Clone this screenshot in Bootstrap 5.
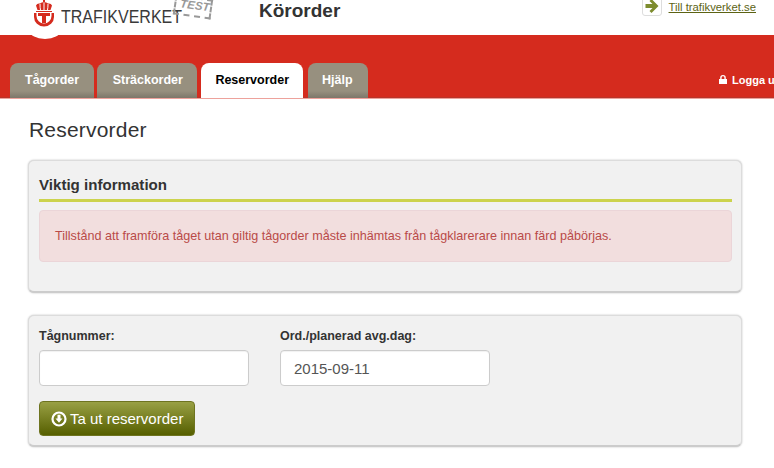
<!DOCTYPE html>
<html lang="sv">
<head>
<meta charset="utf-8">
<title>Körorder</title>
<link href="https://cdn.jsdelivr.net/npm/bootstrap@5.3.0/dist/css/bootstrap.min.css" rel="stylesheet">
<style>
html,body{height:468px;overflow:hidden}
body{font-family:"Liberation Sans",Arial,sans-serif;color:#333;background:#fff}
.topbar{height:35px;overflow:visible}
.brand{width:241px;padding-left:33px}
.brandtext{font-size:18px;line-height:18px;color:#3a3a3a;margin-left:6px;margin-top:8px;transform:scaleX(.89);transform-origin:left center;white-space:nowrap}
.teststamp{font-size:11.5px;font-weight:700;color:#999;border:2px dashed #999;line-height:12px;width:38px;height:20px;padding:0 0 0 4px;transform:rotate(8deg);position:absolute;left:174px;top:-3px;font-style:italic;white-space:nowrap}
.apptitle{font-size:19px;font-weight:700;color:#333;line-height:22px;margin-left:18px}
.extlink{margin-left:auto;margin-right:18px;font-size:11.300px;line-height:14px;gap:7px}
.extlink a{color:#5c6314;font-weight:400}
.arrowbox{width:20px;height:21px;border:1px solid #ddd;border-radius:3px;background:#fff;margin-top:-5px;padding-top:1px}
.redband{height:63px;background:#d52b1e;box-shadow:inset 0 -1px 0 #b8352b,0 1px 0 #eda29c;padding-left:10px;overflow:hidden;position:relative}
.logonotch{position:absolute;left:29px;top:-14px;width:32px;height:18px;background:#fff;border-radius:50%}
.tabrow{gap:3px}
.tabitem{height:35px;padding:0 14px;border-radius:8px 8px 0 0;font-size:12.5px;font-weight:700;color:#fff;background:linear-gradient(#97907f 0,#97907f 80%,#7d776a 100%);line-height:35px;text-decoration:none}
a.tabitem:hover{color:#fff}
.tabitem.tabwide{padding:0 14.500px 0 15.500px}
.tabitem.tabfirst{padding:0 15px}
.tabitem.on{background:#fff;color:#000;margin:0 2px 0 1px}
.tabitem.tablast{padding:0 15px 0 14px}
.logout{position:absolute;left:719px;top:39px;font-size:11px;font-weight:700;color:#fff;white-space:nowrap;line-height:13px}
.logout svg{vertical-align:.500px;margin-right:2px}
.pagebody{padding:0 32px 0 28px}
.pagehead{font-size:21px;font-weight:400;color:#333;line-height:24px;margin:20px 0 18px 1px;letter-spacing:.2px}
.panelbox{background:#f1f1f1;border:1px solid #dcdcdc;border-bottom:2px solid #ccc;border-radius:6px;box-shadow:0 0 2px #bbb;padding:0 9px 0 10px}
.infobox{height:133px;margin-bottom:22px;padding-top:14px}
.infohead{font-size:15.100px;font-weight:700;color:#333;line-height:20px;border-bottom:3px solid #ccd34d;padding-bottom:4px;margin-bottom:8px}
.alertbox{height:52px;background:#f2dede;border:1px solid #ebd5d8;border-radius:4px;color:#b94a48;font-size:12.6px;line-height:50px;padding:0 15px;white-space:nowrap}
.formbox{height:132px;padding-top:12px}
.fieldcol{width:210px}
.fieldgap{gap:31px}
.fieldlabel{font-size:12.5px;font-weight:700;color:#333;line-height:16px;margin-bottom:6px;display:block}
.fieldinput{height:36px;border:1px solid #ccc;border-radius:4px;background:#fff;font-size:15px;color:#555;padding:0 13px;box-shadow:inset 0 1px 1px rgba(0,0,0,.06)}
.gobtn{height:35px;margin-top:15px;background:linear-gradient(#99a044,#565f00);border:1px solid #6e7420;border-radius:4px;color:#fff;font-size:15px;padding:0 11px;line-height:32px;display:inline-flex;align-items:center;gap:3px}
.gobtn:hover{color:#fff;background:linear-gradient(#99a044,#565f00);border-color:#6e7420}
</style>
</head>
<body>
<header class="topbar d-flex position-relative">
  <div class="brand d-flex position-relative">
    <svg width="22" height="28" viewBox="0 0 22 28">
      <path d="M10 0h2v2h-2z" fill="#d52b1e"/>
      <path d="M3 5.500 Q4 3 7 3.500 Q8.500 2 11 2 Q13.500 2 15 3.500 Q18 3 19 5.500 L17.500 10 H4.500 Z" fill="#d52b1e"/>
      <path d="M7 4 Q7 7.500 7.500 10 M11 2.500V10 M15 4 Q15 7.500 14.500 10" stroke="#fff" stroke-width="1" fill="none"/>
      <path d="M3 11h16v1H3z" fill="#d52b1e"/>
      <path d="M1 13 H3.500 V16 A7.500 7.500 0 0 0 18.500 16 V13 H21 V17 A10 9.500 0 0 1 1 17 Z" fill="#d52b1e"/>
      <path d="M5 13 H17 V16 H13 V23 H9 V16 H5 Z" fill="#d52b1e"/>
    </svg>
    <div class="brandtext">TRAFIKVERKET</div>
    <div class="teststamp">TEST</div>
  </div>
  <div class="apptitle">Körorder</div>
  <div class="extlink d-flex">
    <div class="arrowbox d-flex justify-content-center align-items-center">
      <svg width="14" height="14" viewBox="0 0 14 14"><path d="M0.500 5H7.500L4.500 2 6.500 0 13.500 7 6.500 14 4.500 12 7.500 9H0.500Z" fill="#7d8c2e"/></svg>
    </div>
    <a href="#">Till trafikverket.se</a>
  </div>
</header>
<nav class="redband d-flex align-items-end">
  <span class="logonotch"></span>
  <div class="tabrow d-flex">
    <a href="#" class="tabitem tabfirst">Tågorder</a>
    <a href="#" class="tabitem tabwide">Sträckorder</a>
    <a href="#" class="tabitem on">Reservorder</a>
    <a href="#" class="tabitem tablast">Hjälp</a>
  </div>
  <div class="logout">
    <svg width="8" height="9" viewBox="0 0 8 9"><path d="M1.200 4V2.700a2.800 2.700 0 0 1 5.600 0V4H8v5H0V4z M2.600 4h2.800V2.700a1.400 1.400 0 0 0-2.800 0z" fill="#fff" fill-rule="evenodd"/></svg>
    Logga ut
  </div>
</nav>
<main class="pagebody">
  <h1 class="pagehead">Reservorder</h1>
  <section class="panelbox infobox">
    <h2 class="infohead">Viktig information</h2>
    <div class="alertbox">Tillstånd att framföra tåget utan giltig tågorder måste inhämtas från tågklarerare innan färd påbörjas.</div>
  </section>
  <section class="panelbox formbox">
    <div class="d-flex fieldgap">
      <div class="fieldcol">
        <label class="fieldlabel" for="tn">Tågnummer:</label>
        <input id="tn" class="form-control fieldinput" type="text">
      </div>
      <div class="fieldcol">
        <label class="fieldlabel" for="od">Ord./planerad avg.dag:</label>
        <input id="od" class="form-control fieldinput" type="text" value="2015-09-11">
      </div>
    </div>
    <button class="btn gobtn" type="button">
      <svg width="16" height="16" viewBox="0 0 16 16"><circle cx="8" cy="8" r="6.500" fill="none" stroke="#fff" stroke-width="2.200"/><path d="M6.500 3.800h3V7.500h2L8 11.800 4.500 7.500h2z" fill="#fff"/></svg>
      Ta ut reservorder
    </button>
  </section>
</main>
<script src="https://cdn.jsdelivr.net/npm/bootstrap@5.3.0/dist/js/bootstrap.bundle.min.js"></script>
</body>
</html>
